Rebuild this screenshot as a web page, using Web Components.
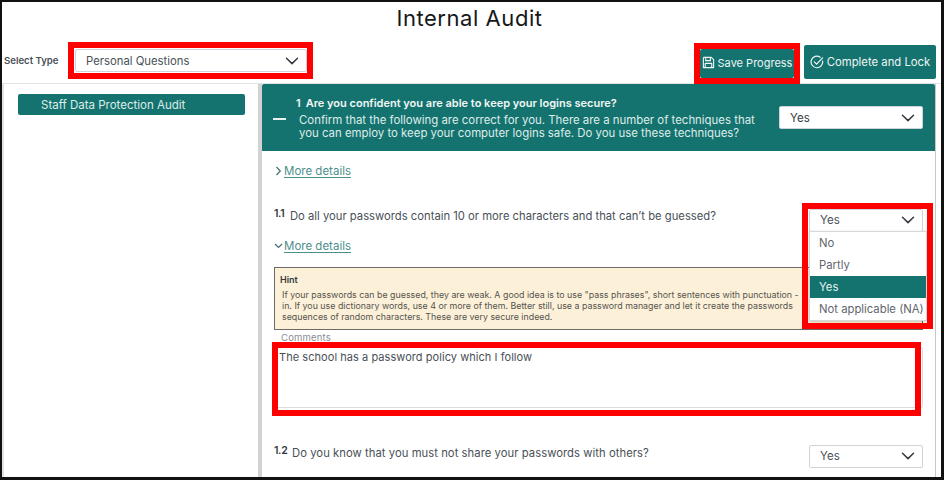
<!DOCTYPE html>
<html><head><meta charset="utf-8"><title>Internal Audit</title>
<style>html,body{margin:0;padding:0;background:#fff}body{font-family:Inter,"Liberation Sans",sans-serif}</style>
</head><body>
<audit-app></audit-app>
<script>
const chev='<svg width="14" height="8" viewBox="0 0 14 8" fill="none" stroke="#343a40" stroke-width="1.5" stroke-linecap="round" stroke-linejoin="round"><path d="M1.5 1.2 7 6.6l5.5-5.4"/></svg>';
function def(name,css,html,init){
  customElements.define(name,class extends HTMLElement{
    constructor(){super();const r=this.attachShadow({mode:'open'});r.innerHTML='<style>'+css+'</style>'+(typeof html==='function'?html(this):html);}
    connectedCallback(){if(init)init(this);}
  });
}
def('audit-select',`
:host{display:flex;align-items:center;justify-content:space-between;box-sizing:border-box;background:#fff;border:1px solid #ced4da;border-radius:2px;font-size:11.5px;color:#495057;height:23px;padding:0 7px 1px 10px}
`,`<span><slot></slot></span>${chev}`);
def('audit-button',`
:host{display:inline-flex;align-items:center;justify-content:center;gap:3px;box-sizing:border-box;background:#15736f;color:#eef5f4;border-radius:2px;font-size:11.3px;white-space:nowrap}
::slotted(svg){flex:none}
`,`<slot name="icon"></slot><slot></slot>`);
def('more-details',`
:host{display:flex;align-items:center;font-size:11.5px;color:#4d8f8c}
svg{flex:none}
span{text-decoration:underline;text-underline-offset:2px;margin-left:1px}
`,h=>`<svg width="9" height="10" viewBox="0 0 9 10" fill="none" stroke="#3f6f6d" stroke-width="1.2">${h.hasAttribute('open')?'<path d="M1 3l3.5 3.5L8 3"/>':'<path d="M2.5 1l3.8 4-3.8 4"/>'}</svg><span><slot></slot></span>`);
def('question-row',`
:host{display:flex;align-items:flex-start;font-size:11.25px;line-height:14px;color:#495057}
b{font-size:10.5px;font-weight:600;color:#343a40;width:16px;flex:none;letter-spacing:-.03em;margin-top:-2px}
:host([wide]) b{width:18px;margin-top:-1px}
:host([wide]) .t{letter-spacing:.05px;padding-top:1px}
.t{flex:1;white-space:nowrap}
::slotted(audit-select){width:114px;flex:none}
`,h=>`<b>${h.getAttribute('num')}</b><div class="t"><slot></slot></div><slot name="answer"></slot>`);
def('hint-box',`
:host{display:block;box-sizing:border-box;height:63px;background:#fdf0d8;border:1px solid #6c6c64;padding:6px 5px 0;font-size:8.85px;line-height:11px;color:#55554f;overflow:hidden;white-space:nowrap}
h4{margin:0 0 4px;font-size:9px;font-weight:600;color:#343a40;line-height:11px}
div{padding-left:2px}
`,`<h4>Hint</h4><div><slot></slot></div>`);
def('comment-box',`
:host{display:block}
label{display:block;font-size:9.5px;letter-spacing:.02em;color:#868e96;padding-left:7px;line-height:12px;margin-bottom:3px}
div{box-sizing:border-box;height:61px;border:1px solid #d8dcdf;border-radius:2px;padding:2px 4px;font-size:11px;color:#495057;line-height:15px;letter-spacing:.005em}
`,`<label>Comments</label><div><slot></slot></div>`);
def('drop-menu',`
:host{display:block;position:absolute;background:#fff;border:1px solid #d5d8da;box-sizing:border-box;font-size:11.3px;color:#5f666d;box-shadow:0 1px 3px rgba(0,0,0,.2)}
`,`<slot></slot>`);
def('drop-item',`
:host{display:flex;align-items:center;height:22px;padding-left:9px;white-space:nowrap}
:host([active]){background:#15736f;color:#e8f2f1}
`,`<slot></slot>`);
def('red-mark',`
:host{display:block;position:absolute;box-sizing:border-box;border:6px solid #fe0000;pointer-events:none}
`,``);
def('section-head',`
:host{display:flex;align-items:center;box-sizing:border-box;height:67px;background:#15736f;color:#dfecea;padding:0 12px 0 11px;border-radius:2px 2px 0 0}
.dash{width:13px;height:2px;background:#e8f2f1;flex:none;margin-top:3px}
.body{flex:1;min-width:0;padding-left:10px}
.q{font-size:11px;font-weight:600;color:#f1f7f6;line-height:14px;margin-bottom:4px;white-space:nowrap}
.q i{font-style:normal;margin-right:5px}
.d{font-size:11.4px;line-height:13px;padding-left:3px;white-space:nowrap}
::slotted(audit-select){width:144px;flex:none;color:#343a40;margin-top:0;padding-bottom:0}
`,h=>`<div class="dash"></div><div class="body"><div class="q"><i>1</i><slot name="title"></slot></div><div class="d"><slot name="desc"></slot></div></div><slot name="answer"></slot>`);
def('audit-app',`
:host{display:block;position:relative;box-sizing:border-box;width:944px;height:480px;border:solid #111;border-width:2px 3px 3px 2px;overflow:hidden;background:#fff;color:#343a40;font-family:Inter,"Liberation Sans",sans-serif}
h1{margin:0;text-align:center;font-weight:400;font-size:22px;line-height:33px;color:#16181a;letter-spacing:.025em;height:33px;padding-right:4px}
.tools{display:flex;align-items:center;height:49px;border-bottom:1px solid #e3e3e3;box-sizing:border-box}
.lab{font-size:9.6px;font-weight:600;color:#495057;margin:3px 16px 0 2px;white-space:nowrap;width:55px}
.tools .type{width:232px;margin-top:3px;padding-left:10px;padding-bottom:0;font-size:11.3px}
.acts{margin-left:auto;display:flex;align-items:flex-start;gap:10px;margin-right:5px;align-self:flex-start;margin-top:10px}
.save{width:94px;height:29px;margin-top:4px;font-size:11px;padding-bottom:2px}
.lock{width:132px;height:34px}
.cols{display:flex;height:399px}
.side{width:256px;box-sizing:border-box;padding:10px 0 0 14px;flex:none;border-left:2px solid #e3e3e3}
.staff{display:flex;align-items:center;width:227px;height:21px;background:#15736f;color:#dfecea;border-radius:2px;font-size:11.5px;padding-left:23px;box-sizing:border-box}
.main{flex:none;width:673px;border-left:4px solid #d2d2d2;border-right:1px solid #c8c8c8}
.content{padding:0 12px;position:relative}
.m1{padding-top:13px}
.q11{margin-top:31px}
.m2{margin-top:7px}
.hint{margin-top:14px}
.cm{margin-top:2px}
.q12{margin-top:37px}
`,`
<h1>Internal Audit</h1>
<div class="tools">
  <span class="lab">Select Type</span>
  <audit-select class="type">Personal Questions</audit-select>
  <div class="acts">
    <audit-button class="save"><svg slot="icon" width="13" height="13" viewBox="0 0 14 14" fill="none" stroke="#eef5f4" stroke-width="1.2" stroke-linejoin="round"><path d="M2 1.500h8l2.500 2.500v8.500H1.500V2z"/><path d="M4 1.500v3.500h5V1.500M3.500 12.500V8h7v4.500"/></svg>Save Progress</audit-button>
    <audit-button class="lock"><svg slot="icon" width="14" height="14" viewBox="0 0 14 14" fill="none" stroke="#eef5f4" stroke-width="1.2" stroke-linecap="round"><path d="M12.600 6A5.800 5.800 0 1 1 10.200 2.200"/><path d="M4.300 6.800l2.300 2.400 6-6.400"/></svg>Complete and Lock</audit-button>
  </div>
</div>
<div class="cols">
  <div class="side"><div class="staff">Staff Data Protection Audit</div></div>
  <div class="main">
    <section-head>
      <span slot="title">Are you confident you are able to keep your logins secure?</span>
      <span slot="desc">Confirm that the following are correct for you. There are a number of techniques that<br>you can employ to keep your computer logins safe. Do you use these techniques?</span>
      <audit-select slot="answer">Yes</audit-select>
    </section-head>
    <div class="content">
      <more-details class="m1">More details</more-details>
      <question-row class="q11" num="1.1">Do all your passwords contain 10 or more characters and that can’t be guessed?<audit-select slot="answer">Yes</audit-select></question-row>
      <more-details class="m2" open>More details</more-details>
      <hint-box class="hint">If your passwords can be guessed, they are weak. A good idea is to use "pass phrases", short sentences with punctuation -<br>in. If you use dictionary words, use 4 or more of them. Better still, use a password manager and let it create the passwords<br>sequences of random characters. These are very secure indeed.</hint-box>
      <comment-box class="cm">The school has a password policy which I follow</comment-box>
      <question-row class="q12" num="1.2" wide>Do you know that you must not share your passwords with others?<audit-select slot="answer">Yes</audit-select></question-row>
    </div>
  </div>
</div>
<drop-menu style="left:807px;top:229px;width:118px;height:90px">
  <drop-item>No</drop-item><drop-item>Partly</drop-item><drop-item active>Yes</drop-item><drop-item>Not applicable (NA)</drop-item>
</drop-menu>
<red-mark style="left:66px;top:40px;width:245px;height:37px"></red-mark>
<red-mark style="left:692px;top:41px;width:106px;height:41px"></red-mark>
<red-mark style="left:800px;top:201px;width:131px;height:126px"></red-mark>
<red-mark style="left:270px;top:340px;width:649px;height:74px"></red-mark>
`);
</script>
</body></html>
